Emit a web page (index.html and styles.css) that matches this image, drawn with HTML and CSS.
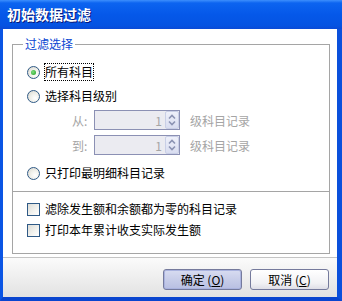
FILE: index.html
```
<!DOCTYPE html>
<html lang="zh-CN">
<head>
<meta charset="UTF-8" />
<title>初始数据过滤</title>
<link rel="stylesheet" href="styles.css">
</head>
<body>
<div class="window">
	<div class="titlebar">初始数据过滤</div>
	<div class="frame">
		<div class="main">
			<fieldset class="group">
				<legend>过滤选择</legend>
				<div class="opt r1"><span class="radio on"></span><span class="focus">所有科目</span></div>
				<div class="opt r2"><span class="radio"></span><span>选择科目级别</span></div>
				<div class="level l1">
					<span class="lbl">从:</span>
					<div class="spin"><span class="val">1</span><span class="arrows"><svg width="12" height="16" viewBox="0 0 12 16"><path d="M3 6.5 6 3.5 9 6.5M3 9.5 6 12.5 9 9.5" fill="none" stroke="#8b93b3" stroke-width="1.6"/></svg></span></div>
					<span class="unit">级科目记录</span>
				</div>
				<div class="level l2">
					<span class="lbl">到:</span>
					<div class="spin"><span class="val">1</span><span class="arrows"><svg width="12" height="16" viewBox="0 0 12 16"><path d="M3 6.5 6 3.5 9 6.5M3 9.5 6 12.5 9 9.5" fill="none" stroke="#8b93b3" stroke-width="1.6"/></svg></span></div>
					<span class="unit">级科目记录</span>
				</div>
				<div class="opt r3"><span class="radio"></span><span>只打印最明细科目记录</span></div>
				<div class="divider"></div>
				<div class="opt c1"><span class="check"></span><span>滤除发生额和余额都为零的科目记录</span></div>
				<div class="opt c2"><span class="check"></span><span>打印本年累计收支实际发生额</span></div>
			</fieldset>
		</div>
		<div class="footer">
			<button type="button" class="btn default">确定 (<u>O</u>)</button>
			<button type="button" class="btn">取消 (<u>C</u>)</button>
		</div>
	</div>
</div>
</body>
</html>
```
FILE: styles.css
```
body{
	margin: 0;
	font-family: "Noto Sans CJK SC", "Liberation Sans", sans-serif;
	font-size: 12px;
	color: #000;
}
.window{
	width: 342px;
	height: 301px;
	display: flex;
	flex-direction: column;
	background: #0b4fd8;
}
.titlebar{
	height: 29px;
	box-sizing: border-box;
	padding: 6px 0 0 7px;
	font-size: 14px;
	font-weight: bold;
	line-height: 17px;
	color: #fff;
	text-shadow: 1px 1px 0 #0a1a7a;
	background: linear-gradient(#3d8ffd 0, #0c64f0 3px, #0558e9 50%, #0553e2 88%, #0a4ad6 100%);
}
.frame{
	flex: 1;
	display: flex;
	flex-direction: column;
	border-left: 3px solid #0b55e4;
	border-right: 5px solid #0b50dc;
	border-bottom: 4px solid #0a45cf;
	background: #fff;
}
.main{
	padding: 8px 7px 3px 9px;
}
.group{
	margin: 0;
	padding: 12px 0 14px 14px;
	border: 1px solid #a5a5a5;
	min-width: 0;
}
.group legend{
	padding: 0 2px;
	margin-left: -4px;
	line-height: 14px;
	color: #0a46d2;
}
.opt{
	display: flex;
	align-items: center;
	height: 18px;
	line-height: 16px;
}
.r2{ margin-top: 6px; }
.r3{ margin-top: 9px; }
.c1{ margin-top: 8px; }
.c2{ margin-top: 3px; }
.radio{
	width: 13px;
	height: 13px;
	box-sizing: border-box;
	border: 1px solid #2f5a86;
	border-radius: 50%;
	background: radial-gradient(circle at 65% 65%, #fff 0, #f0f0ea 45%, #d6d4cc 100%);
	margin-right: 5px;
	display: flex;
	align-items: center;
	justify-content: center;
}
.radio.on::after{
	content: "";
	width: 5px;
	height: 5px;
	border-radius: 50%;
	background: radial-gradient(circle at 40% 40%, #7ee07e, #1f9a1f);
}
.check{
	width: 13px;
	height: 13px;
	box-sizing: border-box;
	border: 1px solid #2f5a86;
	background: linear-gradient(135deg, #dcdcd6, #f4f4f0 60%, #fff);
	margin-right: 5px;
}
.focus{
	border: 1px dotted #000;
	padding: 0 0;
	margin-left: -1px;
}
.level{
	display: flex;
	align-items: center;
	height: 20px;
	color: #a5a5a5;
}
.l1{ margin-top: 5px; }
.l2{ margin-top: 5px; }
.lbl{
	width: 22px;
	margin-left: 45px;
}
.spin{
	width: 86px;
	height: 20px;
	box-sizing: border-box;
	border: 1px solid #8b90b4;
	background: #ebebf1;
	display: flex;
	align-items: center;
	justify-content: flex-end;
}
.val{
	padding-right: 3px;
}
.arrows{
	width: 14px;
	height: 18px;
	box-sizing: border-box;
	border: 1px solid #c9cfe6;
	border-radius: 2px;
	background: linear-gradient(#eef0fa, #d9ddf0);
	display: flex;
	align-items: center;
	justify-content: center;
}
.arrows svg{
	display: block;
}
.unit{
	margin-left: 10px;
}
.divider{
	margin: 9px 0 0 -14px;
	height: 1px;
	background: #a5a5a5;
}
.footer{
	height: 40px;
	box-sizing: border-box;
	border-top: 1px solid #c4c4c4;
	background: linear-gradient(#fbfbfb, #e2e2e2);
	display: flex;
	justify-content: flex-end;
	gap: 8px;
	padding: 11px 8px 0 0;
}
.btn{
	width: 79px;
	height: 21px;
	padding: 0;
	font-family: inherit;
	font-size: 12px;
	line-height: 16px;
	color: #000;
	border: 1px solid #757a9c;
	border-radius: 3px;
	background: linear-gradient(#ffffff, #f1f1f4 70%, #dedee6);
}
.btn.default{
	background: linear-gradient(#d8dcf1, #c4cae7 60%, #b8bfe2);
	box-shadow: inset 0 0 0 1px #aab3df;
}
.btn u{
	text-underline-offset: 1px;
}
```
